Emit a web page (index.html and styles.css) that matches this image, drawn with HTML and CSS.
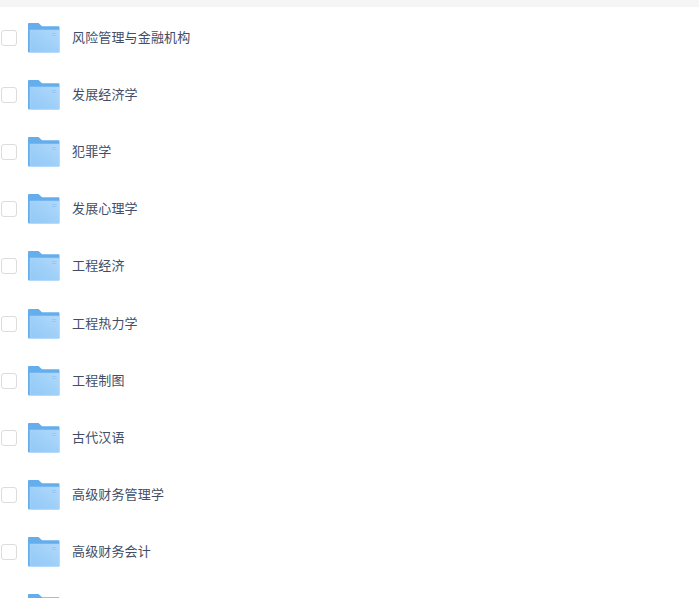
FILE: index.html
```html
<!DOCTYPE html>
<html lang="zh">
<head>
<meta charset="utf-8">
<title>文件列表</title>
<link rel="stylesheet" href="styles.css">
</head>
<body>
<svg class="defs" width="0" height="0" aria-hidden="true">
  <defs>
    <linearGradient id="front" x1="0" y1="1" x2="1" y2="0">
      <stop offset="0" stop-color="#93c9f7"/>
      <stop offset="0.45" stop-color="#9dcff8"/>
      <stop offset="1" stop-color="#b2d9fb"/>
    </linearGradient>
    <symbol id="folder" viewBox="0 0 32 30">
      <path d="M0 1Q0 0 1 0H10.5L14 3.2H30.5Q31.5 3.2 31.5 4.2V28.5Q31.5 29.5 30.5 29.5H1Q0 29.5 0 28.5Z" fill="#64aeee"/>
      <path d="M2.2 7.2H30.6Q31.4 7.2 31.4 8V28.6Q31.4 29.4 30.6 29.4H2.2Z" fill="url(#front)" stroke="#c4e1fb" stroke-width="0.6"/>
      <path d="M24 10.5H28.5M24 12.5H28.5" stroke="#97c8f3" stroke-width="1"/>
    </symbol>
  </defs>
</svg>
<div class="topbar"></div>
<ul class="list">
  <li class="row"><span class="check"></span><svg class="icon"><use href="#folder"/></svg><span class="name">风险管理与金融机构</span></li>
  <li class="row"><span class="check"></span><svg class="icon"><use href="#folder"/></svg><span class="name">发展经济学</span></li>
  <li class="row"><span class="check"></span><svg class="icon"><use href="#folder"/></svg><span class="name">犯罪学</span></li>
  <li class="row"><span class="check"></span><svg class="icon"><use href="#folder"/></svg><span class="name">发展心理学</span></li>
  <li class="row"><span class="check"></span><svg class="icon"><use href="#folder"/></svg><span class="name">工程经济</span></li>
  <li class="row"><span class="check"></span><svg class="icon"><use href="#folder"/></svg><span class="name">工程热力学</span></li>
  <li class="row"><span class="check"></span><svg class="icon"><use href="#folder"/></svg><span class="name">工程制图</span></li>
  <li class="row"><span class="check"></span><svg class="icon"><use href="#folder"/></svg><span class="name">古代汉语</span></li>
  <li class="row"><span class="check"></span><svg class="icon"><use href="#folder"/></svg><span class="name">高级财务管理学</span></li>
  <li class="row"><span class="check"></span><svg class="icon"><use href="#folder"/></svg><span class="name">高级财务会计</span></li>
  <li class="row"><span class="check"></span><svg class="icon"><use href="#folder"/></svg></li>
</ul>
</body>
</html>
```
FILE: styles.css
```css
html, body {
  margin: 0;
  padding: 0;
  height: 100%;
  overflow: hidden;
  background: #fff;
}
body {
  font-family: "Noto Sans CJK SC", "Liberation Sans", sans-serif;
}
.defs {
  display: block;
  height: 0;
}
.topbar {
  height: 7px;
  background: #f5f5f5;
}
.list {
  list-style: none;
  margin: 0;
  padding: 2px 0 0;
}
.row {
  display: flex;
  align-items: center;
  height: 57.2px;
  padding-left: 1px;
}
.check {
  box-sizing: border-box;
  flex: none;
  width: 16px;
  height: 16px;
  border: 1px solid #dcdcdc;
  border-radius: 3px;
  background: #fff;
}
.icon {
  flex: none;
  width: 32px;
  height: 30px;
  margin-left: 11px;
}
.name {
  margin-left: 12px;
  margin-bottom: 2px;
  font-size: 13px;
  line-height: 20px;
  letter-spacing: 0.15px;
  color: #424e67;
}
```
